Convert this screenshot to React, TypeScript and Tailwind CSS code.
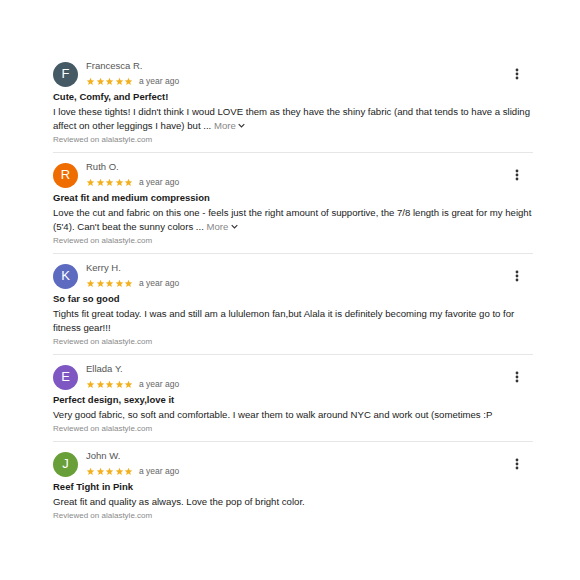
import React from "react";

type Review = {
  name: string;
  initial: string;
  color: string;
  title: string;
  body: string;
  more?: boolean;
};

const reviews: Review[] = [
  {
    name: "Francesca R.",
    initial: "F",
    color: "bg-[#455a64]",
    title: "Cute, Comfy, and Perfect!",
    body: "I love these tights! I didn't think I woud LOVE them as they have the shiny fabric (and that tends to have a sliding affect on other leggings I have) but ...",
    more: true,
  },
  {
    name: "Ruth O.",
    initial: "R",
    color: "bg-[#ef6c00]",
    title: "Great fit and medium compression",
    body: "Love the cut and fabric on this one - feels just the right amount of supportive, the 7/8 length is great for my height (5'4). Can't beat the sunny colors ...",
    more: true,
  },
  {
    name: "Kerry H.",
    initial: "K",
    color: "bg-[#5c6bc0]",
    title: "So far so good",
    body: "Tights fit great today. I was and still am a lululemon fan,but Alala it is definitely becoming my favorite go to for\nfitness gear!!!",
  },
  {
    name: "Ellada Y.",
    initial: "E",
    color: "bg-[#7e57c2]",
    title: "Perfect design, sexy,love it",
    body: "Very good fabric, so soft and comfortable. I wear them to walk around NYC and work out (sometimes :P",
  },
  {
    name: "John W.",
    initial: "J",
    color: "bg-[#689f38]",
    title: "Reef Tight in Pink",
    body: "Great fit and quality as always. Love the pop of bright color.",
  },
];

function Stars() {
  return (
    <div className="flex gap-[0.5px]">
      {[0, 1, 2, 3, 4].map((i) => (
        <svg key={i} width="9" height="9" viewBox="0 0 24 24">
          <path
            fill="#f2b01e"
            d="M12 17.27 18.18 21l-1.64-7.03L22 9.24l-7.19-.61L12 2 9.19 8.63 2 9.24l5.46 4.73L5.82 21z"
          />
        </svg>
      ))}
    </div>
  );
}

function Dots() {
  return (
    <svg width="4" height="12" viewBox="0 0 4 12">
      <circle cx="2" cy="2" r="1.4" fill="#333" />
      <circle cx="2" cy="6" r="1.4" fill="#333" />
      <circle cx="2" cy="10" r="1.4" fill="#333" />
    </svg>
  );
}

function ReviewItem({ r, last }: { r: Review; last: boolean }) {
  return (
    <div className={`pt-[7px] pb-[5px] ${last ? "" : "border-b border-[#e6e6e6]"}`}>
      <div className="flex items-center">
        <div
          className={`w-[25px] h-[25px] rounded-full ${r.color} flex items-center justify-center text-white text-[13px] shrink-0`}
        >
          {r.initial}
        </div>
        <div className="ml-[8px] flex flex-col">
          <div className="text-[9.5px] leading-[14px] text-[#555]">{r.name}</div>
          <div className="flex items-center gap-[6px] h-[16px]">
            <Stars />
            <span className="text-[8.5px] text-[#666]">a year ago</span>
          </div>
        </div>
        <div className="ml-auto mr-[14px] flex items-center">
          <Dots />
        </div>
      </div>
      <div className="mt-[1px] text-[9.5px] leading-[14px] font-semibold text-[#1a1a1a]">
        {r.title}
      </div>
      <div className="mt-[0.5px] text-[9.6px] leading-[14px] text-[#222] whitespace-pre-line">
        {r.body}
        {r.more && (
          <span className="text-[#888]">
            {" "}More{" "}
            <svg width="7" height="5" viewBox="0 0 10 6" className="inline-block align-middle">
              <path d="M1 1l4 4 4-4" stroke="#333" strokeWidth="1.6" fill="none" />
            </svg>
          </span>
        )}
      </div>
      <div className="mt-[0.5px] text-[8px] leading-[14px] text-[#8a8a8a]">Reviewed on alalastyle.com</div>
    </div>
  );
}

export default function App() {
  return (
    <div
      className="w-[580px] h-[580px] bg-white pt-[52px] pl-[53px] pr-[47px]"
      style={{ fontFamily: '"Liberation Sans", Arial, sans-serif' }}
    >
      {reviews.map((r, i) => (
        <ReviewItem key={i} r={r} last={i === reviews.length - 1} />
      ))}
    </div>
  );
}
